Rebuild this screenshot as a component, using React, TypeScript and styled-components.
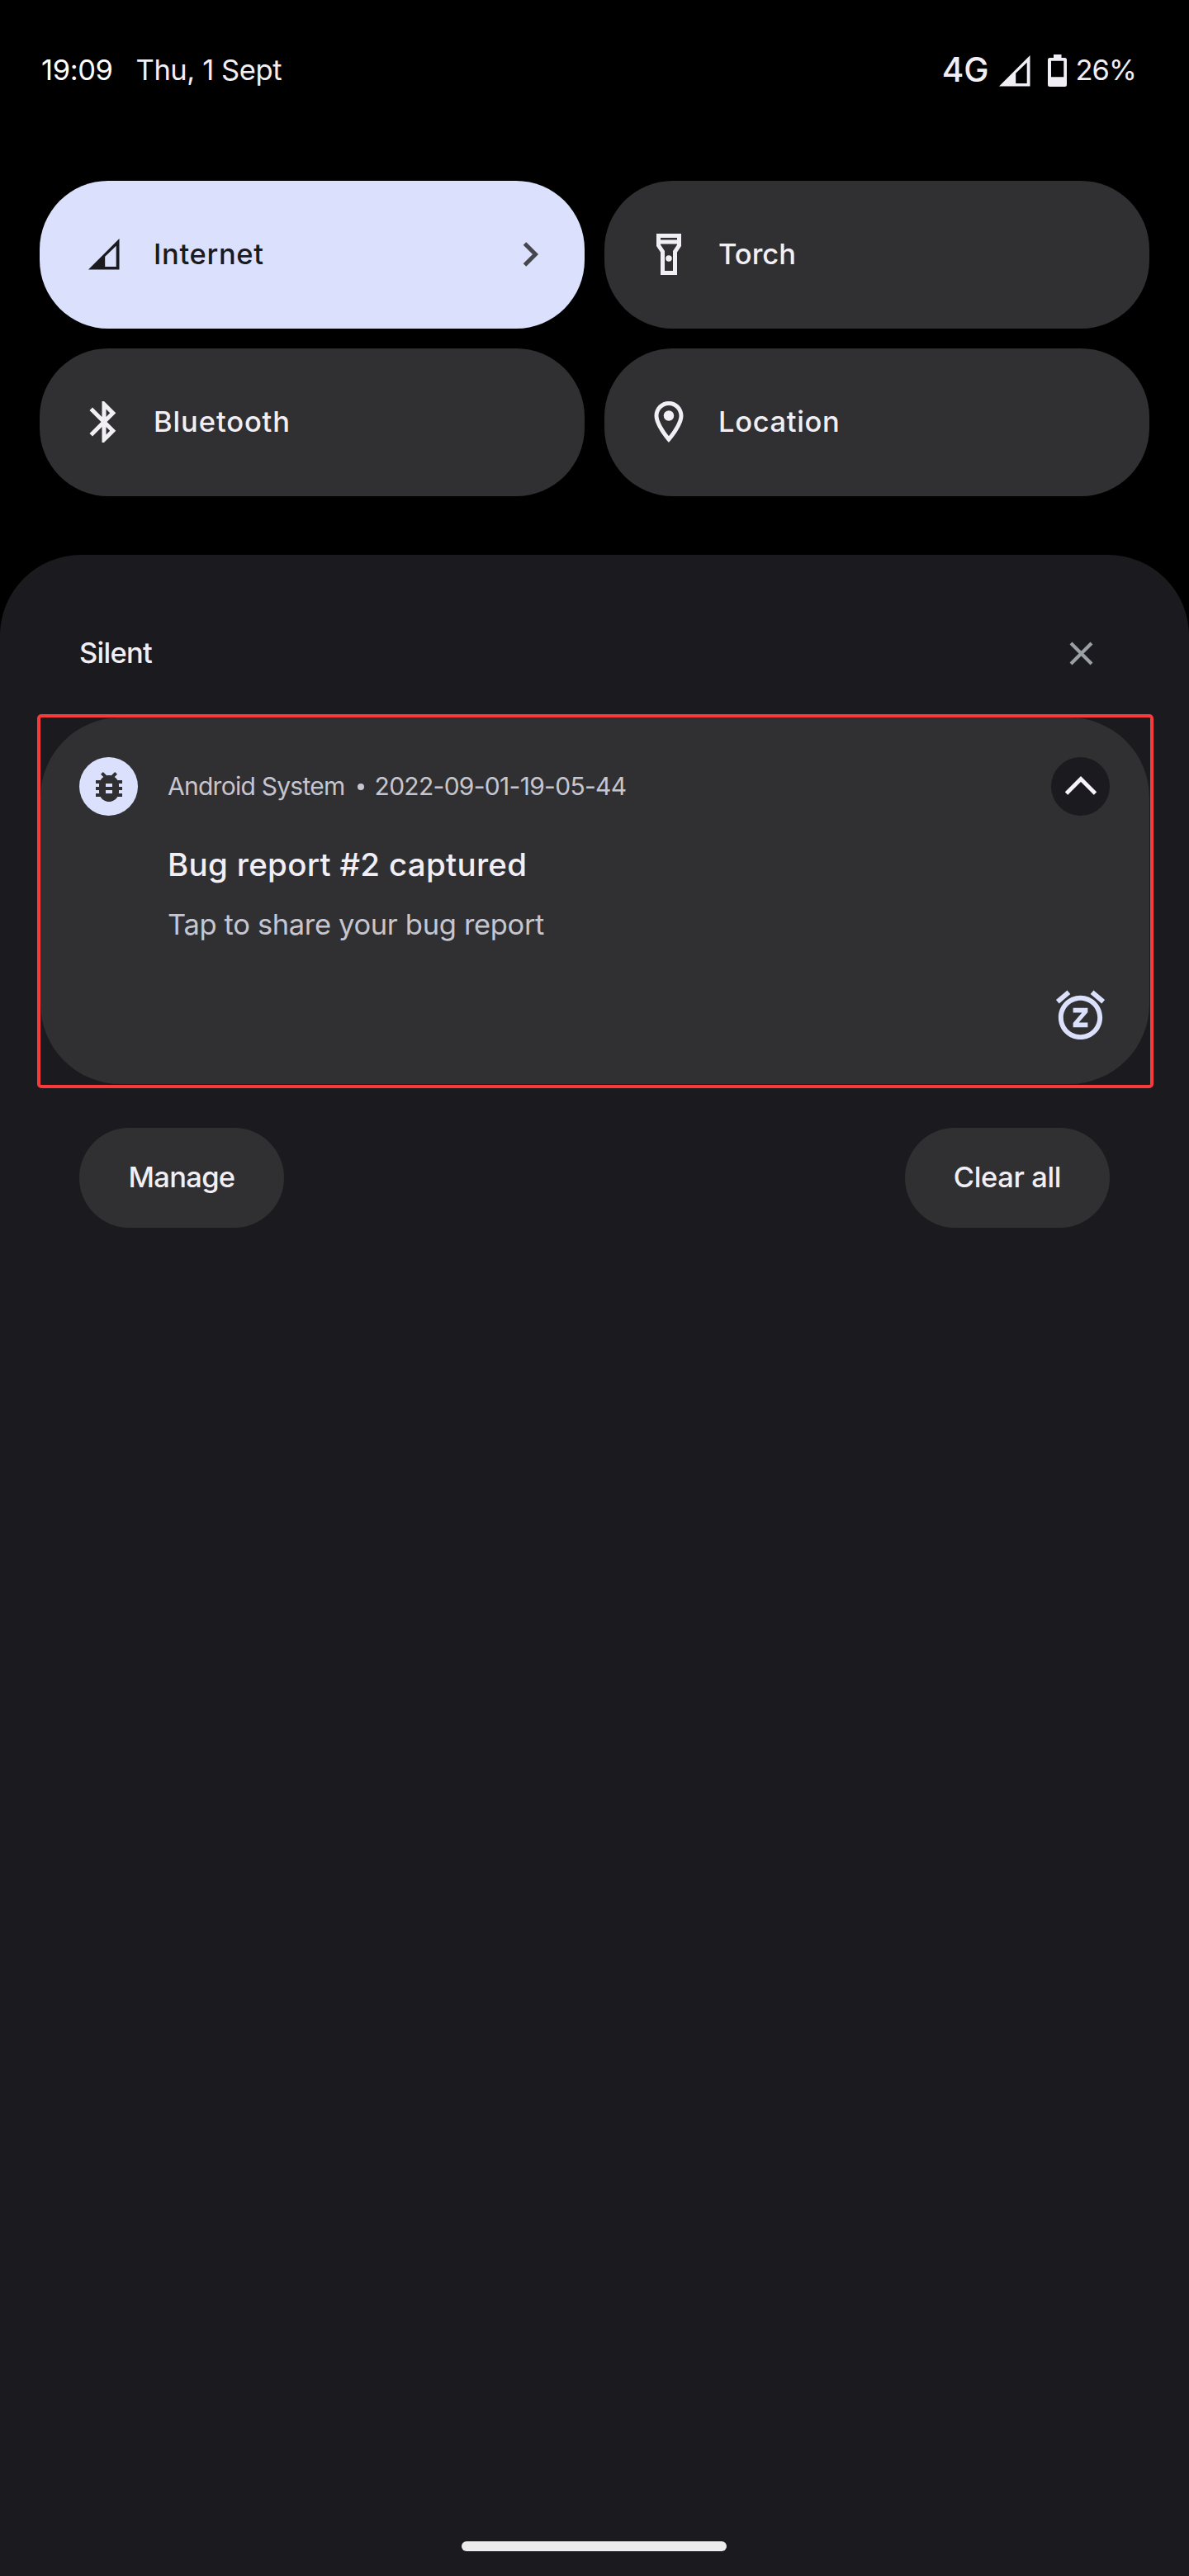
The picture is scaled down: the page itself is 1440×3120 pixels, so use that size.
import React from "react";
import styled, { createGlobalStyle } from "styled-components";

const GlobalStyle = createGlobalStyle`
  * { box-sizing: border-box; }
  body {
    margin: 0;
    background: #000;
    color: #f1eff5;
    font-family: Inter, "Liberation Sans", sans-serif;
  }
  svg { display: block; flex: none; }
  button { border: 0; padding: 0; margin: 0; background: none; color: inherit; font: inherit; }
`;

const Screen = styled.main`
  width: 1440px;
  height: 3120px;
  display: flex;
  flex-direction: column;
  background: #000;
  overflow: hidden;
`;

const Text = styled.span<{ $size?: number; $weight?: number; $track?: number; $color?: string }>`
  font-size: ${(p) => p.$size ?? 34.5}px;
  font-weight: ${(p) => p.$weight ?? 500};
  letter-spacing: ${(p) => p.$track ?? 0}px;
  color: ${(p) => p.$color ?? "#f1eff5"};
  line-height: 40px;
  white-space: nowrap;
`;

/* Status bar */

const StatusBar = styled.header`
  height: 169px;
  padding: 0 64px 0 50px;
  display: flex;
  align-items: center;
  justify-content: space-between;
`;

const StatusSide = styled.div`
  display: flex;
  align-items: center;
`;

const DateText = styled(Text)`
  margin-left: 28px;
`;

const SignalSlot = styled.div`
  margin: 2px 21px 0 12px;
`;

const BatterySlot = styled.div`
  margin: 2px 11px 0 0;
`;

/* Quick settings */

const TileGrid = styled.section`
  display: grid;
  grid-template-columns: 660px 660px;
  grid-auto-rows: 179px;
  gap: 24px;
  padding: 50px 48px 71px;
`;

const Tile = styled.button<{ $active?: boolean }>`
  display: flex;
  align-items: center;
  padding: 0 48px 1px;
  border-radius: 83px;
  background: ${(p) => (p.$active ? "#dbe1fc" : "#303032")};
  color: ${(p) => (p.$active ? "#1b1b1f" : "#f1eff5")};
`;

const TileIcon = styled.span`
  width: 60px;
  height: 60px;
  margin-right: 30px;
  display: flex;
  align-items: center;
  justify-content: center;
`;

const TileLabel = styled(Text)`
  flex: 1;
  text-align: left;
  padding-bottom: 1px;
`;

/* Notification shade */

const Shade = styled.section`
  flex: 1;
  display: flex;
  flex-direction: column;
  background: #1b1b1f;
  border-radius: 98px 98px 0 0;
`;

const SectionHeader = styled.div`
  display: flex;
  align-items: center;
  justify-content: space-between;
  height: 60px;
  margin: 89px 107px 44px 96px;
`;

const Highlight = styled.div`
  width: 1352px;
  height: 453px;
  margin-left: 45px;
  padding: 0 1px 1px 0;
  border: 4px solid #f93a3a;
  border-radius: 5px;
`;

const Card = styled.article`
  height: 100%;
  display: flex;
  flex-direction: column;
  padding: 48px 48px 48px 47px;
  border-radius: 97px;
  background: #303032;
`;

const CardHeader = styled.div`
  display: flex;
  align-items: center;
  height: 71px;
`;

const Disc = styled.span<{ $bg: string; $fg: string }>`
  width: 71px;
  height: 71px;
  flex: none;
  border-radius: 50%;
  display: flex;
  align-items: center;
  justify-content: center;
  background: ${(p) => p.$bg};
  color: ${(p) => p.$fg};
`;

const CardMeta = styled.div`
  flex: 1;
  display: flex;
  align-items: center;
  margin-left: 36px;
  padding-bottom: 2px;
`;

const Dot = styled.span`
  width: 8px;
  height: 8px;
  margin: 2px 13px 0 15px;
  border-radius: 50%;
  background: #c5c6d0;
`;

const CardBody = styled.div`
  display: flex;
  flex-direction: column;
  gap: 33px;
  margin: 39px 0 0 107px;
`;

const SnoozeButton = styled.button`
  align-self: flex-end;
  margin-top: auto;
  color: #dbe1fc;
`;

const Footer = styled.div`
  display: flex;
  justify-content: space-between;
  padding: 48px 96px 0;
`;

const Pill = styled.button`
  width: 248px;
  height: 121px;
  padding-bottom: 2px;
  display: flex;
  align-items: center;
  justify-content: center;
  border-radius: 61px;
  background: #303032;
`;

const HomeBar = styled.div`
  width: 321px;
  height: 12px;
  margin: auto 0 30px 559px;
  border-radius: 6px;
  background: #ececec;
`;

/* Icons */

const SignalIcon = () => (
  <svg width="38" height="38" viewBox="0 0 38 38" fill="currentColor">
    <path fillRule="evenodd" d="M0 37.6H37.5V0ZM20.2 34V21.8L33.7 8.8V34Z" />
  </svg>
);

const BatteryIcon = () => (
  <svg width="23" height="39" viewBox="0 0 23 39" fill="currentColor">
    <path
      fillRule="evenodd"
      d="M7 0H16.5V4H20.5Q23 4 23 6.5V36.5Q23 39 20.5 39H2.5Q0 39 0 36.5V6.5Q0 4 2.5 4H7ZM4 7.7V27.3H19.3V7.7Z"
    />
  </svg>
);

const MaterialIcon = ({ d, size, dot }: { d: string; size: number; dot?: [number, number, number] }) => (
  <svg width={size} height={size} viewBox="0 0 24 24" fill="currentColor">
    <path d={d} />
    {dot && <circle cx={dot[0]} cy={dot[1]} r={dot[2]} />}
  </svg>
);

const StrokeIcon = ({ w, h, d, color, width }: { w: number; h: number; d: string; color: string; width: number }) => (
  <svg width={w} height={h} viewBox={`0 0 ${w} ${h}`} fill="none" stroke={color} strokeWidth={width}>
    <path d={d} />
  </svg>
);

const BLUETOOTH =
  "M17.71 7.71L12 2h-1v7.59L6.41 5 5 6.41 10.59 12 5 17.59 6.41 19 11 14.41V22h1l5.71-5.71L13.41 12l4.3-4.29zM13 5.83l1.88 1.88L13 9.59V5.83zm1.88 10.46L13 18.17v-3.76l1.88 1.88z";
const TORCH = "M6 2v6l2 3v11h8V11l2-3V2H6zm10 2v1H8V4h8zm-2 6.4V20h-4v-9.61l-2-3V7h8v.39l-2 3.01z";
const PLACE =
  "M12 2C8.13 2 5 5.13 5 9c0 5.25 7 13 7 13s7-7.75 7-13c0-3.87-3.13-7-7-7zM7 9c0-2.76 2.24-5 5-5s5 2.24 5 5c0 2.88-2.88 7.19-5 9.88C9.92 16.21 7 11.85 7 9z";
const BUG =
  "M20 8h-2.81c-.45-.78-1.07-1.45-1.82-1.96L17 4.41 15.59 3l-2.17 2.17C12.96 5.06 12.49 5 12 5c-.49 0-.96.06-1.41.17L8.41 3 7 4.41l1.62 1.63C7.88 6.55 7.26 7.22 6.81 8H4v2h2.09c-.05.33-.09.66-.09 1v1H4v2h2v1c0 .34.04.67.09 1H4v2h2.81c1.04 1.79 2.97 3 5.19 3s4.15-1.21 5.19-3H20v-2h-2.09c.05-.33.09-.66.09-1v-1h2v-2h-2v-1c0-.34-.04-.67-.09-1H20V8zm-6 8h-4v-2h4v2zm0-4h-4v-2h4v2z";
const SNOOZE =
  "M7.88 3.39L6.6 1.86 2 5.71l1.29 1.53 4.59-3.85zM22 5.72l-4.6-3.86-1.29 1.53 4.6 3.86L22 5.72zM12 4c-4.97 0-9 4.03-9 9s4.02 9 9 9c4.97 0 9-4.03 9-9s-4.03-9-9-9zm0 16c-3.87 0-7-3.13-7-7s3.13-7 7-7 7 3.13 7 7-3.13 7-7 7zm-3-9h3.63L9 15.2V17h6v-2h-3.63L15 10.8V9H9v2z";

export default function App() {
  return (
    <Screen>
      <GlobalStyle />
      <StatusBar>
        <StatusSide>
          <Text $weight={400} $track={-0.4} $color="#fff">19:09</Text>
          <DateText $weight={400} $track={-0.42}>Thu, 1 Sept</DateText>
        </StatusSide>
        <StatusSide>
          <Text $size={40.5}>4G</Text>
          <SignalSlot><SignalIcon /></SignalSlot>
          <BatterySlot><BatteryIcon /></BatterySlot>
          <Text $weight={400} $track={-0.95}>26%</Text>
        </StatusSide>
      </StatusBar>

      <TileGrid>
        <Tile $active>
          <TileIcon><SignalIcon /></TileIcon>
          <TileLabel $track={0.66} $color="#1b1b1f">Internet</TileLabel>
          <StrokeIcon w={30} h={32} d="M5.5 3L18.500 16L5.5 29" color="#46474d" width={5} />
        </Tile>
        <Tile>
          <TileIcon><MaterialIcon size={60} d={TORCH} dot={[12, 14, 1.5]} /></TileIcon>
          <TileLabel>Torch</TileLabel>
        </Tile>
        <Tile>
          <TileIcon><MaterialIcon size={60} d={BLUETOOTH} /></TileIcon>
          <TileLabel $track={0.88}>Bluetooth</TileLabel>
        </Tile>
        <Tile>
          <TileIcon><MaterialIcon size={60} d={PLACE} dot={[12, 9, 2.5]} /></TileIcon>
          <TileLabel $track={0.64}>Location</TileLabel>
        </Tile>
      </TileGrid>

      <Shade>
        <SectionHeader>
          <Text $track={-0.74}>Silent</Text>
          <StrokeIcon w={48} h={48} d="M12 12L37 37M37 12L12 37" color="#9aa0a3" width={4.2} />
        </SectionHeader>

        <Highlight>
          <Card>
            <CardHeader>
              <Disc $bg="#dbe1fc" $fg="#303032">
                <MaterialIcon size={48} d={BUG} />
              </Disc>
              <CardMeta>
                <Text $size={30} $weight={400} $track={-0.74} $color="#c5c6d0">Android System</Text>
                <Dot />
                <Text $size={30} $weight={400} $track={-0.7} $color="#c5c6d0">2022-09-01-19-05-44</Text>
              </CardMeta>
              <Disc $bg="#1b1b1f" $fg="#f6f4fa">
                <StrokeIcon w={48} h={48} d="M6.500 32L24 14.500L41.500 32" color="currentColor" width={4.8} />
              </Disc>
            </CardHeader>
            <CardBody>
              <Text $size={38.5} $track={0.29}>Bug report #2 captured</Text>
              <Text $weight={400} $track={-0.34} $color="#c5c6d0">Tap to share your bug report</Text>
            </CardBody>
            <SnoozeButton>
              <MaterialIcon size={71} d={SNOOZE} />
            </SnoozeButton>
          </Card>
        </Highlight>

        <Footer>
          <Pill><Text $track={-0.7}>Manage</Text></Pill>
          <Pill><Text $track={-0.38}>Clear all</Text></Pill>
        </Footer>

        <HomeBar />
      </Shade>
    </Screen>
  );
}
